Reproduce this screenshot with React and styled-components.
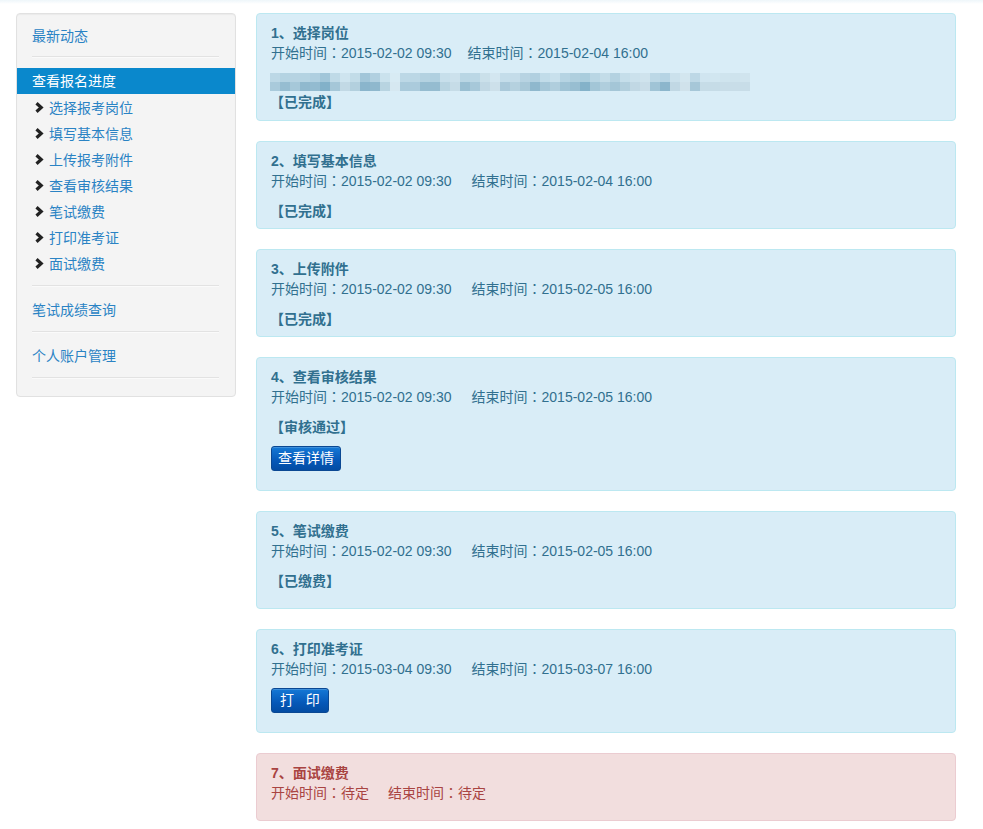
import React from "react";
import styled, { createGlobalStyle } from "styled-components";

const Global = createGlobalStyle`
  html, body { margin: 0; padding: 0; background: #fff; }
  body {
    font-family: "Liberation Sans", Arial, "Noto Sans CJK SC", sans-serif;
    font-size: 14px;
    color: #333;
  }
`;

const TopEdge = styled.div`
  height: 4px;
  background: linear-gradient(#eef6fa, #fff);
`;

const Page = styled.div`
  display: flex;
  align-items: flex-start;
  gap: 20px;
  padding: 9px 0 8px 16px;
`;

const Sidebar = styled.nav`
  width: 218px;
  flex: none;
  background: #f4f4f4;
  border: 1px solid #e1e1e1;
  border-radius: 4px;
  box-shadow: inset 0 1px 1px rgba(0, 0, 0, 0.04);
  padding: 12px 0 17px;
`;

const NavLink = styled.a`
  display: block;
  padding: 0 15px;
  line-height: 20px;
  height: 20px;
  color: #2a83c4;
  text-decoration: none;
  cursor: pointer;
`;

const ActiveLink = styled.a`
  display: block;
  padding: 0 15px;
  height: 26px;
  line-height: 26px;
  background: #0a88cc;
  color: #fff;
  text-decoration: none;
`;

const SubLink = styled.a`
  display: flex;
  align-items: center;
  gap: 5px;
  height: 26px;
  padding-left: 18px;
  color: #2a83c4;
  text-decoration: none;
  cursor: pointer;
  svg { flex: none; }
`;

const Divider = styled.div`
  height: 1px;
  background: #e2e2e2;
  border-bottom: 1px solid #fafafa;
  margin: ${(p) => p.$top}px 16px ${(p) => p.$bottom}px 15px;
`;

const Main = styled.main`
  width: 700px;
  display: flex;
  flex-direction: column;
  gap: 20px;
`;

const Panel = styled.section`
  background: ${(p) => (p.$danger ? "#f2dede" : "#d9edf7")};
  border: 1px solid ${(p) => (p.$danger ? "#ebccd1" : "#bce8f1")};
  color: ${(p) => (p.$danger ? "#a94442" : "#31708f")};
  border-radius: 4px;
  padding: 9px 14px ${(p) => p.$pb}px;
  line-height: 20px;
`;

const Title = styled.div`
  font-weight: bold;
`;

const Times = styled.div`
  display: flex;
  height: 20px;
  gap: ${(p) => p.$gap}px;
  white-space: nowrap;
`;

const TimeText = styled.span`
  height: 20px;
  line-height: 20px;
`;

const Colon = styled.span`
  font-family: "Noto Sans CJK TC", "Noto Sans CJK SC", sans-serif;
  line-height: 0;
`;

const Status = styled.div`
  font-weight: bold;
  margin-top: ${(p) => p.$mt}px;
  margin-left: -1px;
`;

const Mosaic = styled.svg`
  display: block;
  margin: 10px 0 1px -1px;
`;

const Button = styled.button`
  display: inline-block;
  margin-top: 9px;
  height: 25px;
  padding: 0 ${(p) => p.$px}px;
  border: 1px solid #0a4893;
  border-radius: 3px;
  background: linear-gradient(#1579d6, #0558b8 60%, #034ca3);
  box-shadow: inset 0 1px 0 rgba(255, 255, 255, 0.18);
  color: #fff;
  font-family: inherit;
  font-size: 14px;
  line-height: 23px;
  cursor: pointer;
`;

const ButtonRow = styled.div`
  display: block;
  margin-bottom: 11px;
`;

const Chevron = () => (
  <svg width="9" height="11" viewBox="0 0 9 11">
    <polyline points="1.5,1.3 6.2,5.5 1.5,9.7" fill="none" stroke="#222" strokeWidth="3.2" />
  </svg>
);

const mosaicColors = [
  "#a9cadb", "#96bdd1", "#a6c8d9", "#90b9ce", "#93bbd0", "#82b1c9", "#a5c7d8", "#c2d9e5",
  "#b3d0de", "#8ab5cc", "#8fb8cd", "#b8d4e1", "#d6e8f1", "#a9cadb", "#abcbdc", "#95bcd0",
  "#95bcd0", "#b8d4e1", "#c6dce7", "#99bfd2", "#a7c8d9", "#c1d8e4", "#cde0ea", "#aac9da",
  "#b5d1df", "#a8c8d8", "#8fb8cd", "#a5c7d8", "#b0cedd", "#9fc3d5", "#98bed1", "#84b2c9",
  "#a3c6d7", "#b0cedd", "#a4c6d7", "#b2cfdd", "#c1d8e4", "#c9dde8", "#a0c4d6", "#8cb6cc",
  "#c1d8e4", "#d0e2eb", "#a6c7d8", "#c6dce7", "#c6dce7", "#c8dde8", "#c8dde8", "#c8dde8",
];
const topOpacity = [0.6, 0.55, 0.7, 0.5, 0.6, 0.65, 0.5, 0.45, 0.6, 0.7, 0.55, 0.45, 0.4, 0.6, 0.65, 0.55];

const BlurredLine = () => (
  <Mosaic width="480" height="18" viewBox="0 0 480 18">
    {mosaicColors.map((c, i) => (
      <g key={i}>
        <rect x={i * 10} y="0" width="10" height="9" fill={c} opacity={topOpacity[i % topOpacity.length]} />
        <rect x={i * 10} y="9" width="10" height="9" fill={c} />
      </g>
    ))}
  </Mosaic>
);

const TimeLine = ({ start, end, gap }) => (
  <Times $gap={gap}>
    <TimeText>开始时间<Colon>：</Colon>{start}</TimeText>
    <TimeText>结束时间<Colon>：</Colon>{end}</TimeText>
  </Times>
);

const subItems = ["选择报考岗位", "填写基本信息", "上传报考附件", "查看审核结果", "笔试缴费", "打印准考证", "面试缴费"];

export default function App() {
  return (
    <>
      <Global />
      <TopEdge />
      <Page>
        <Sidebar>
          <NavLink>最新动态</NavLink>
          <Divider $top={10} $bottom={10} />
          <ActiveLink>查看报名进度</ActiveLink>
          {subItems.map((s) => (
            <SubLink key={s}>
              <Chevron />
              {s}
            </SubLink>
          ))}
          <Divider $top={9} $bottom={13} />
          <NavLink>笔试成绩查询</NavLink>
          <Divider $top={11} $bottom={13} />
          <NavLink>个人账户管理</NavLink>
          <Divider $top={11} $bottom={0} />
        </Sidebar>
        <Main>
          <Panel $pb={8}>
            <Title>1、选择岗位</Title>
            <TimeLine gap={16} start="2015-02-02 09:30" end="2015-02-04 16:00" />
            <BlurredLine />
            <Status $mt={0}>【已完成】</Status>
          </Panel>
          <Panel $pb={7}>
            <Title>2、填写基本信息</Title>
            <TimeLine gap={20} start="2015-02-02 09:30" end="2015-02-04 16:00" />
            <Status $mt={10}>【已完成】</Status>
          </Panel>
          <Panel $pb={7}>
            <Title>3、上传附件</Title>
            <TimeLine gap={20} start="2015-02-02 09:30" end="2015-02-05 16:00" />
            <Status $mt={10}>【已完成】</Status>
          </Panel>
          <Panel $pb={8}>
            <Title>4、查看审核结果</Title>
            <TimeLine gap={20} start="2015-02-02 09:30" end="2015-02-05 16:00" />
            <Status $mt={10}>【审核通过】</Status>
            <ButtonRow>
              <Button $px={6}>查看详情</Button>
            </ButtonRow>
          </Panel>
          <Panel $pb={17}>
            <Title>5、笔试缴费</Title>
            <TimeLine gap={20} start="2015-02-02 09:30" end="2015-02-05 16:00" />
            <Status $mt={10}>【已缴费】</Status>
          </Panel>
          <Panel $pb={8}>
            <Title>6、打印准考证</Title>
            <TimeLine gap={20} start="2015-03-04 09:30" end="2015-03-07 16:00" />
            <ButtonRow>
              <Button $px={8}>打&nbsp;&nbsp;&nbsp;印</Button>
            </ButtonRow>
          </Panel>
          <Panel $danger $pb={17}>
            <Title>7、面试缴费</Title>
            <TimeLine gap={19} start="待定" end="待定" />
          </Panel>
        </Main>
      </Page>
    </>
  );
}
